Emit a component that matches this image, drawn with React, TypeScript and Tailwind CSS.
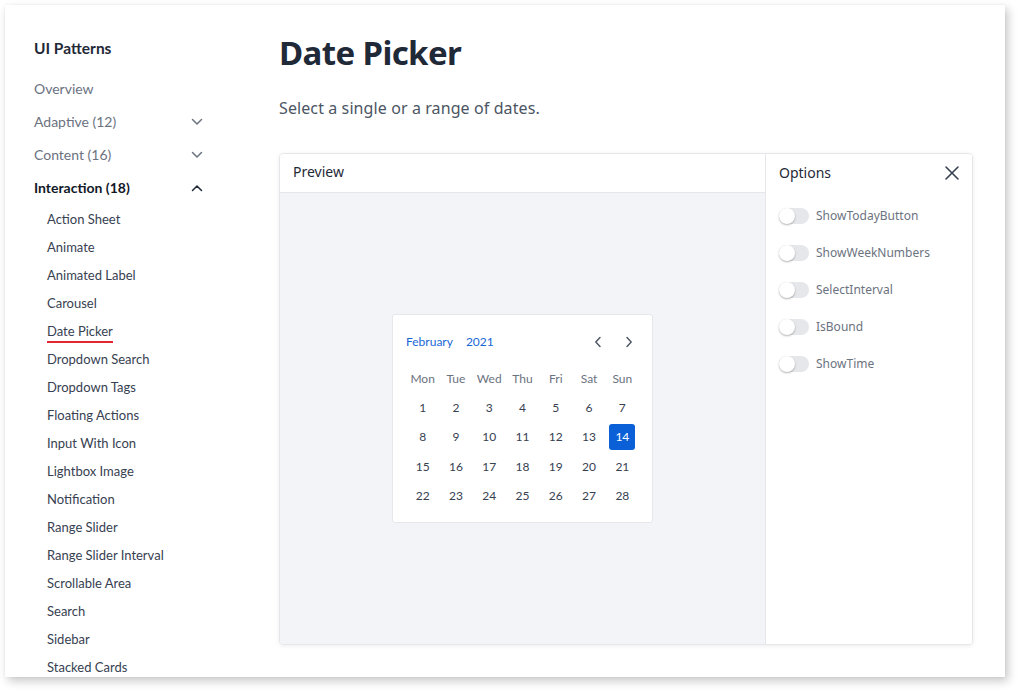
import React from "react";

const sub = [
  "Action Sheet",
  "Animate",
  "Animated Label",
  "Carousel",
  "Date Picker",
  "Dropdown Search",
  "Dropdown Tags",
  "Floating Actions",
  "Input With Icon",
  "Lightbox Image",
  "Notification",
  "Range Slider",
  "Range Slider Interval",
  "Scrollable Area",
  "Search",
  "Sidebar",
  "Stacked Cards",
];

const options = ["ShowTodayButton", "ShowWeekNumbers", "SelectInterval", "IsBound", "ShowTime"];
const days = ["Mon", "Tue", "Wed", "Thu", "Fri", "Sat", "Sun"];

function ChevronDown({ up, dark }: { up?: boolean; dark?: boolean }) {
  return (
    <svg width="12" height="8" viewBox="0 0 12 8" fill="none">
      <path
        d={up ? "M1.5 6.5 L6 2 L10.5 6.5" : "M1.5 1.5 L6 6 L10.5 1.5"}
        stroke={dark ? "#1f2937" : "#6b7280"}
        strokeWidth="1.5"
        strokeLinecap="round"
        strokeLinejoin="round"
      />
    </svg>
  );
}

export default function App() {
  const weeks: number[][] = [];
  for (let w = 0; w < 4; w++) {
    const row: number[] = [];
    for (let d = 1; d <= 7; d++) row.push(w * 7 + d);
    weeks.push(row);
  }
  return (
    <div className="w-[1020px] h-[692px] bg-white overflow-hidden">
      <div className="ml-[5px] mt-[5px] w-[1000px] h-[672px] bg-white shadow-[3px_4px_9px_rgba(0,0,0,0.22),0_0_2px_rgba(0,0,0,0.06)] overflow-hidden flex">
        {/* Sidebar */}
        <div className="w-[274px] shrink-0 pl-[29px] pt-[34px] font-['Lato',sans-serif]">
          <div className="h-[20px] flex items-center text-[15.5px] font-bold text-[#1f2937]">UI Patterns</div>
          <div className="mt-[13px] w-[169px]">
            <div className="h-[33px] flex items-center text-[14px] text-[#6b7280]">Overview</div>
            <div className="h-[33px] flex items-center justify-between text-[14px] text-[#6b7280]">
              <span>Adaptive (12)</span>
              <ChevronDown />
            </div>
            <div className="h-[33px] flex items-center justify-between text-[14px] text-[#6b7280]">
              <span>Content (16)</span>
              <ChevronDown />
            </div>
            <div className="h-[33px] flex items-center justify-between text-[14px] font-bold text-[#111827]">
              <span>Interaction (18)</span>
              <ChevronDown up dark />
            </div>
          </div>
          <div className="mt-[2px] pl-[13px]">
            {sub.map((s) => (
              <div key={s} className="h-[28px] flex items-center text-[13px] text-[#374151]">
                {s === "Date Picker" ? (
                  <span className="relative">
                    {s}
                    <span className="absolute left-0 right-0 top-[19px] h-[2px] bg-[#e3262f]" />
                  </span>
                ) : (
                  s
                )}
              </div>
            ))}
          </div>
        </div>

        {/* Main */}
        <div className="flex-1 font-['Noto_Sans',sans-serif]">
          <h1 className="mt-[26px] h-[44px] flex items-center text-[33px] font-bold text-[#1f2937] tracking-[-0.6px]">
            Date Picker
          </h1>
          <p className="mt-[21px] h-[24px] flex items-center text-[16px] text-[#4b5563] tracking-[0.1px]">
            Select a single or a range of dates.
          </p>
          <div className="mt-[33px] w-[694px] h-[492px] rounded-[4px] border border-[#e5e7eb] shadow-[0_1px_4px_rgba(0,0,0,0.08)] flex overflow-hidden">
            <div className="flex-1 flex flex-col">
              <div className="h-[39px] shrink-0 border-b border-[#e5e7eb] bg-white flex items-center pl-[13px] pb-[3px] text-[14px] text-[#1f2937]">
                Preview
              </div>
              <div className="flex-1 bg-[#f3f4f8] flex items-center justify-center">
                <div className="w-[261px] h-[209px] bg-white border border-[#e5e7eb] rounded-[3px] px-[13px] pt-[12px] font-['Lato',sans-serif]">
                  <div className="h-[30px] flex items-center justify-between">
                    <div className="flex items-center gap-[13px] text-[12px] text-[#1767d6]">
                      <span>February</span>
                      <span>2021</span>
                    </div>
                    <div className="flex items-center gap-[11px]">
                      <div className="w-[20px] h-[20px] flex items-center justify-center">
                        <svg width="8" height="12" viewBox="0 0 8 12" fill="none">
                          <path d="M6 1.5 L1.8 6 L6 10.5" stroke="#4b5563" strokeWidth="1.4" strokeLinecap="round" strokeLinejoin="round" />
                        </svg>
                      </div>
                      <div className="w-[20px] h-[20px] flex items-center justify-center">
                        <svg width="8" height="12" viewBox="0 0 8 12" fill="none">
                          <path d="M2 1.5 L6.2 6 L2 10.5" stroke="#4b5563" strokeWidth="1.4" strokeLinecap="round" strokeLinejoin="round" />
                        </svg>
                      </div>
                    </div>
                  </div>
                  <div className="mt-[7px] grid grid-cols-7">
                    {days.map((d) => (
                      <div key={d} className="h-[29.4px] flex items-center justify-center text-[12px] text-[#6b7280]">
                        {d}
                      </div>
                    ))}
                    {weeks.flat().map((n) => (
                      <div key={n} className="h-[29.4px] flex items-center justify-center">
                        {n === 14 ? (
                          <div className="w-[26px] h-[26px] rounded-[3px] bg-[#0b5fd7] text-white text-[12px] flex items-center justify-center">
                            14
                          </div>
                        ) : (
                          <span className="text-[12px] text-[#374151]">{n}</span>
                        )}
                      </div>
                    ))}
                  </div>
                </div>
              </div>
            </div>
            <div className="w-[207px] shrink-0 border-l border-[#e5e7eb] bg-white">
              <div className="h-[39px] flex items-center justify-between pl-[13px] pr-[12px] pb-[2px]">
                <span className="text-[14px] text-[#1f2937] pb-px">Options</span>
                <svg width="16" height="16" viewBox="0 0 16 16" fill="none">
                  <path d="M2 2 L14 14 M14 2 L2 14" stroke="#374151" strokeWidth="1.6" strokeLinecap="round" />
                </svg>
              </div>
              <div className="pt-[4px] pl-[13px]">
                {options.map((o) => (
                  <div key={o} className="h-[37px] flex items-center gap-[7px]">
                    <div className="relative w-[30px] h-[16px] rounded-full bg-[#e5e7eb]">
                      <div className="absolute left-0 top-0 w-[16px] h-[16px] rounded-full bg-white shadow-[0_1px_2px_rgba(0,0,0,0.3)]" />
                    </div>
                    <span className="text-[12px] text-[#6b7280]">{o}</span>
                  </div>
                ))}
              </div>
            </div>
          </div>
        </div>
      </div>
    </div>
  );
}
